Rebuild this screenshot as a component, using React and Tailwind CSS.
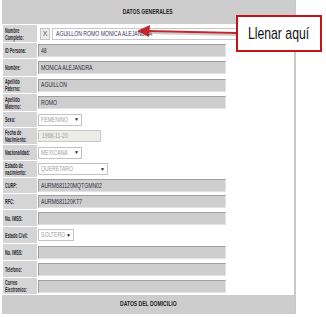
import React from "react";

const rows = [
  { label: ["Nombre", "Completo:"], kind: "full", h: "h-[17px]" },
  { label: ["ID Persona:"], kind: "text", value: "48", h: "h-[15px]" },
  { label: ["Nombre:"], kind: "text", value: "MONICA ALEJANDRA", h: "h-[17px]" },
  { label: ["Apellido", "Paterno:"], kind: "text", value: "AGUILLON", h: "h-[16px]" },
  { label: ["Apellido", "Materno:"], kind: "text", value: "ROMO", h: "h-[17px]" },
  { label: ["Sexo:"], kind: "select", value: "FEMENINO", w: "w-[44px]", h: "h-[15px]" },
  { label: ["Fecha de", "Nacimiento:"], kind: "date", value: "1968-11-20", h: "h-[16px]" },
  { label: ["Nacionalidad:"], kind: "select", value: "MEXICANA", w: "w-[44px]", h: "h-[15px]" },
  { label: ["Estado de", "nacimiento:"], kind: "select", value: "QUERETARO", w: "w-[70px]", h: "h-[16px]" },
  { label: ["CURP:"], kind: "text", value: "AURM681120MQTGMN02", h: "h-[15px]" },
  { label: ["RFC:"], kind: "text", value: "AURM681120KT7", h: "h-[15px]" },
  { label: ["No. IMSS:"], kind: "text", value: "", h: "h-[16px]" },
  { label: ["Estado Civil:"], kind: "select", value: "SOLTERO", w: "w-[36px]", h: "h-[16px]" },
  { label: ["No. IMSS:"], kind: "text", value: "", h: "h-[16px]" },
  { label: ["Telefono:"], kind: "text", value: "", h: "h-[16px]" },
  { label: ["Correo", "Electronico:"], kind: "text", value: "", h: "h-[16px]" },
];

// condensed text: the page uses a narrow face, squeeze Arial-width text
const Sq = ({ children, className = "" }) => (
  <span className={`inline-block whitespace-nowrap origin-left scale-x-[0.64] ${className}`}>{children}</span>
);

function Field({ row }) {
  if (row.kind === "full") {
    return (
      <div className="flex items-center gap-[2px] pl-[2px]">
        <div className="w-[10px] h-[12px] bg-[#ececec] border border-[#c4c4c4] text-[7px] text-[#555] flex items-center justify-center leading-none">
          X
        </div>
        <div className="w-[213px] h-[12px] bg-white border border-[#c8c8c8] flex items-center pl-[3px] text-[8px] leading-none text-[#3b3563]">
          <Sq>AGUILLON ROMO MONICA ALEJANDRA</Sq>
        </div>
      </div>
    );
  }
  if (row.kind === "select") {
    return (
      <div
        className={`${row.w} h-[12px] bg-white border border-[#c2c2c2] flex items-center justify-between pl-[2px] pr-[2px] text-[8px] leading-none text-[#a0a0a0]`}
      >
        <Sq className="w-0">{row.value}</Sq>
        <span className="text-[5px] text-[#222]">▼</span>
      </div>
    );
  }
  if (row.kind === "date") {
    return (
      <div className="w-[63px] h-[12px] bg-[#ededea] border border-[#c8c8c8] flex items-center pl-[3px] text-[8px] leading-none text-[#9a9a9a]">
        <Sq>{row.value}</Sq>
      </div>
    );
  }
  return (
    <div className="w-[188px] h-[13px] bg-[#cecece] border border-t-[#9e9e9e] border-l-[#9e9e9e] border-b-[#e2e2e2] border-r-[#e2e2e2] flex items-center pl-[2px] text-[8px] leading-none text-[#2f2f3c]">
      <Sq>{row.value}</Sq>
    </div>
  );
}

export default function App() {
  return (
    <div className="relative w-[326px] h-[317px] bg-white overflow-hidden font-['Liberation_Sans',Arial,sans-serif]">
      <div className="ml-[2px] w-[294px] h-[314px] border-r-2 border-[#c9c9c9] flex flex-col gap-[1px]">
        <div className="h-[24px] bg-[#cdcdcd] flex items-center justify-center text-[7px] font-bold text-[#222]">
          <span className="inline-block whitespace-nowrap scale-x-[0.72]">DATOS GENERALES</span>
        </div>
        {rows.map((row, i) => (
          <div key={i} className={`flex gap-[1px] ${row.h} pl-[1px]`}>
            <div className="w-[34px] shrink-0 bg-[#d5d5d5] flex flex-col justify-center pl-[2px] text-[6.5px] font-bold leading-[7px] text-[#1f1f2c]">
              {row.label.map((l, j) => (
                <span key={j} className="inline-block whitespace-nowrap origin-left scale-x-[0.58]">
                  {l}
                </span>
              ))}
            </div>
            <div className="flex-1 bg-white flex items-center">
              <Field row={row} />
            </div>
          </div>
        ))}
        <div className="h-[19px] bg-[#cdcdcd] flex items-center justify-center text-[7px] font-bold text-[#222]">
          <span className="inline-block whitespace-nowrap scale-x-[0.72]">DATOS DEL DOMICILIO</span>
        </div>
      </div>

      {/* callout arrow */}
      <svg className="absolute left-0 top-0" width="326" height="317">
        <line x1="236" y1="35" x2="148" y2="33" stroke="#9a9a9a" strokeWidth="2" opacity="0.5" />
        <line x1="236" y1="33" x2="147" y2="31" stroke="#c3262c" strokeWidth="2.2" />
        <polygon points="137,31 150,25 149,37" fill="#c3262c" />
      </svg>

      <div className="absolute left-[236px] top-[15px] w-[86px] h-[37px] bg-white border-2 border-[#c3141c] flex items-center justify-center">
        <span className="inline-block whitespace-nowrap scale-x-[0.72] text-[17px] leading-none text-[#111]">
          Llenar aquí
        </span>
      </div>
    </div>
  );
}
